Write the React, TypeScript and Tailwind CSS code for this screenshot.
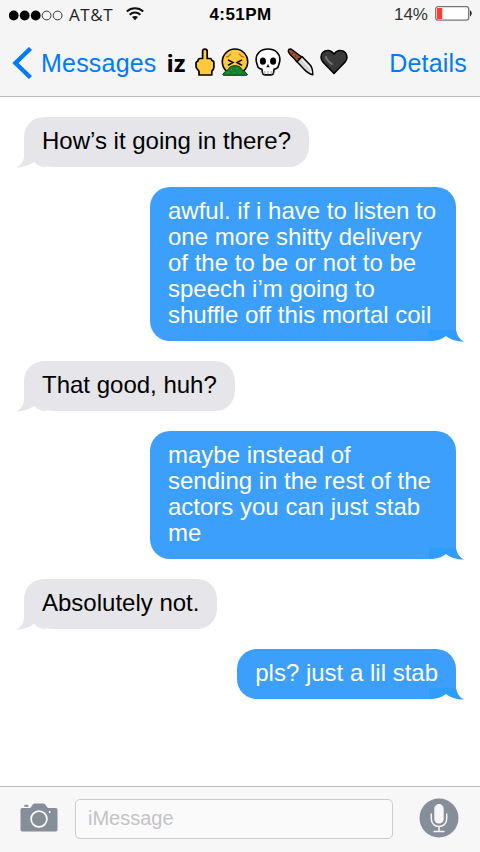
import React from 'react';

interface Message {
  id: number;
  text: string;
  sent: boolean;
}

const messages: Message[] = [
  { id: 1, text: 'How’s it going in there?', sent: false },
  {
    id: 2,
    text: 'awful. if i have to listen to one more shitty delivery of the to be or not to be speech i’m going to shuffle off this mortal coil',
    sent: true
  },
  { id: 3, text: 'That good, huh?', sent: false },
  { id: 4, text: 'maybe instead of sending in the rest of the actors you can just stab me', sent: true },
  { id: 5, text: 'Absolutely not.', sent: false },
  { id: 6, text: 'pls? just a lil stab', sent: true }
];

const SignalDots: React.FC = () => (
  <svg className="w-[54px] h-[11px]" viewBox="0 0 54 11">
    {[5, 16, 27].map((cx) => (
      <circle key={cx} cx={cx - 0.3} cy="5.5" r="4.9" fill="#000" />
    ))}
    {[38, 49].map((cx) => (
      <circle key={cx} cx={cx - 0.4} cy="5.5" r="4.4" fill="none" stroke="#222" strokeWidth="0.9" />
    ))}
  </svg>
);

const WifiIcon: React.FC = () => (
  <svg className="w-[18px] h-[14px]" viewBox="0 0 18 14" fill="none" stroke="#111" strokeWidth="2">
    <path d="M0.8 4.5C5.5 0.2 12.5 0.2 17.2 4.5" />
    <path d="M3.6 7.7C6.8 4.9 11.2 4.9 14.4 7.7" />
    <path d="M6 10.1C7.7 8.5 10.3 8.5 12 10.1L9 13.2Z" fill="#111" stroke="none" />
  </svg>
);

const BatteryIcon: React.FC = () => (
  <svg className="w-[37px] h-[15px]" viewBox="0 0 37 15">
    <rect x="0.7" y="0.7" width="33" height="13.4" rx="2.3" fill="#fff" stroke="#777" strokeWidth="1.3" />
    <rect x="2" y="2" width="5.2" height="11" fill="#ff3b30" />
    <path d="M35 4.3C37.2 5.3 37.2 9.4 35 10.4Z" fill="#222" />
  </svg>
);

const MiddleFinger: React.FC = () => (
  <svg className="w-5 h-7" viewBox="0 0 20 28">
    <path
      d="M7.6 10.5V3.3C7.6 0.3 12.2 0.3 12.2 3.3V10.5H15.4Q16.5 10.6 16.7 12.2L18.4 13.2Q19 13.7 18.9 15V19.5Q18.8 21.2 16.8 23.2V27H4V23.2L1.8 20.5Q1 19.5 1 18V14.8Q1.1 13.6 2.8 13.1L3.6 11.2Q4 10.5 5 10.5Z"
      fill="#ffc83d"
      stroke="#000"
      strokeWidth="1.7"
      strokeLinejoin="round"
    />
  </svg>
);

const VomitFace: React.FC = () => (
  <svg className="w-7 h-7" viewBox="0 0 28 28">
    <circle cx="14" cy="13.7" r="12.7" fill="#ffc83d" stroke="#000" strokeWidth="1.6" />
    <path d="M5 9.2Q8.3 8.4 9.9 5.8M23 9.2Q19.7 8.4 18.1 5.8" fill="none" stroke="#bd7c12" strokeWidth="1.3" />
    <path d="M7 11.8L12 14.5L7 17.4M21 11.8L16 14.5L21 17.4" fill="none" stroke="#000" strokeWidth="1.5" />
    <path
      d="M7.4 21.5C8 18.7 11 17.7 14 17.7S20 18.7 20.6 21.5C22.4 22.6 24.5 23.5 26.3 26.4Q26.6 27.2 25.3 27.3H2.8Q1.4 27.2 2 26.1C3.7 23.5 5.3 22.5 7.4 21.5Z"
      fill="#16802b"
      stroke="#063d12"
      strokeWidth="1"
    />
    <path d="M9 22l2-1M15 20l2 1M6 25l2-1M12 25l2-1M18 24l2 1" stroke="#27a340" strokeWidth="1" />
  </svg>
);

const Skull: React.FC = () => (
  <svg className="w-[26px] h-7" viewBox="0 0 26 28">
    <path
      d="M13 1C5.8 1 1.1 5.5 1.1 11.5C1.1 14 2 15.8 2.4 17.3C2.8 19.8 4 20.6 6.9 21.2L7.5 25Q7.8 26.9 9.7 26.9H16.3Q18.2 26.9 18.5 25L19.1 21.2C22 20.6 23.2 19.8 23.6 17.3C24 15.8 24.9 14 24.9 11.5C24.9 5.5 20.2 1 13 1Z"
      fill="#fff"
      stroke="#000"
      strokeWidth="1.6"
    />
    <ellipse cx="7.9" cy="13.2" rx="3" ry="3.6" />
    <ellipse cx="18.1" cy="13.2" rx="3" ry="3.6" />
    <path d="M13 16L14.7 19.3H11.3Z" />
    <path d="M9.8 23V26.5M13 23V26.5M16.2 23V26.5" stroke="#999" strokeWidth="1" />
  </svg>
);

const Knife: React.FC = () => (
  <svg className="w-[27px] h-7" viewBox="0 0 27 28">
    <path
      d="M9.8 13.6L15 8.6L23.4 17.3C25.2 19.6 25.7 23 25.8 26.8C21.5 25.8 18.8 23.3 16.6 20.8Z"
      fill="#d4d4d4"
      stroke="#000"
      strokeWidth="1.5"
      strokeLinejoin="round"
    />
    <path d="M14.5 11L22 19C23.4 20.6 24.2 22.6 24.5 25" stroke="#f4f4f4" strokeWidth="1.2" fill="none" />
    <path
      d="M1.2 2.8Q1.7 0.6 4.4 1.2L14.5 8.9L10 13.8C8.2 12.6 7.9 10.9 6 9.4C4 7.6 1.5 5.8 1.2 2.8Z"
      fill="#a0522d"
      stroke="#000"
      strokeWidth="1.4"
      strokeLinejoin="round"
    />
    <path d="M5 5.2h.9M8.2 8h.9M10.7 10.5h.9" stroke="#2b1308" strokeWidth="1" />
  </svg>
);

const BlackHeart: React.FC = () => (
  <svg className="w-7 h-7" viewBox="0 0 28 28">
    <path
      d="M14 25.4L3.1 14.2C0.5 11.3 0.3 7 2.8 4.5C5.9 1.3 11.3 1.8 14 6.2C16.7 1.8 22.1 1.3 25.2 4.5C27.7 7 27.5 11.3 24.9 14.2Z"
      fill="#393939"
      stroke="#000"
      strokeWidth="1.6"
      strokeLinejoin="round"
    />
    <path d="M6 9Q6.8 12.8 11.8 16" fill="none" stroke="#777" strokeWidth="2" strokeLinecap="round" />
  </svg>
);

const CameraIcon: React.FC = () => (
  <svg className="-mt-[2px] w-[38px] h-[29px]" viewBox="0 0 38 29">
    <path
      d="M2.2 5H10.3L12.8 1.5Q13.5 0.5 15 0.5H23Q24.5 0.5 25.2 1.5L27.8 5H35.8Q37.5 5 37.5 6.8V26.6Q37.5 28.5 35.8 28.5H2.2Q0.5 28.5 0.5 26.6V6.8Q0.5 5 2.2 5Z"
      fill="#858e99"
    />
    <path d="M4.2 3.7V3Q4.2 1.8 5.4 1.8H7.2Q8.5 1.8 8.5 3V3.7Z" fill="#858e99" />
    <circle cx="19" cy="16" r="7.9" fill="none" stroke="#fff" strokeWidth="1.7" />
    <circle cx="29.7" cy="9" r="1" fill="#fff" />
  </svg>
);

const MicIcon: React.FC = () => (
  <svg className="w-10 h-10" viewBox="0 0 40 40">
    <circle cx="20" cy="20" r="19.5" fill="#858e99" />
    <rect x="15.3" y="6" width="9.4" height="19.6" rx="4.7" fill="#f7f7f7" />
    <path d="M12.3 15.5V21C12.3 31 27.7 31 27.7 21V15.5" fill="none" stroke="#f7f7f7" strokeWidth="1.5" />
    <path d="M20 28V33M14.5 33.4H25.5" stroke="#f7f7f7" strokeWidth="1.5" />
  </svg>
);

const Bubble: React.FC<{ message: Message }> = ({ message }) => {
  if (message.sent) {
    return (
      <div className="relative self-end max-w-[306px] px-[18px] pt-[11px] pb-[13px] rounded-[20px] rounded-br-[28px] bg-[#3b9ffb] text-white">
        <svg className="absolute -right-2 -bottom-px w-[35px] h-[30px]" viewBox="0 0 35 30">
          <path d="M0 0H27V18.5H0Z" fill="#3b9ffb" />
          <path d="M0 18H27C28 23 30 27 35 29.6C28 29.3 22 28 17 24C13 27 8 29 0 29Z" fill="#2e9dff" />
        </svg>
        <span className="relative">{message.text}</span>
      </div>
    );
  }
  return (
    <div className="relative self-start max-w-[306px] px-[18px] pt-[11px] pb-[13px] rounded-[20px] rounded-bl-[28px] bg-[#e5e5ea] text-black">
      <svg className="absolute -left-2 -bottom-px w-[30px] h-[30px]" viewBox="0 0 30 30">
        <path d="M8 0V17C8 22 6 27 0 29.8C7 29.5 13 27.5 18 24C21 27 25 29 30 29V0Z" fill="#e5e5ea" />
      </svg>
      <span className="relative">{message.text}</span>
    </div>
  );
};

const App: React.FC = () => {
  return (
    <div className="flex flex-col w-[480px] h-[852px] overflow-hidden bg-white font-['Liberation_Sans',sans-serif]">
      <header className="h-[97px] shrink-0 bg-[#f5f5f5] border-b border-[#bdbdbd]">
        {/* Status bar */}
        <div className="grid grid-cols-3 items-center h-[30px] pl-[9px] pr-2">
          <div className="flex items-center">
            <SignalDots />
            <span className="ml-[6px] w-[45px] text-[17px] leading-[30px] tracking-[0.6px] text-[#222] font-['Open_Sans',sans-serif]">AT&amp;T</span>
            <span className="ml-3 -mt-[3px]">
              <WifiIcon />
            </span>
          </div>
          <span className="text-center text-[17px] leading-[30px] tracking-[0.4px] font-bold text-black">4:51PM</span>
          <div className="flex items-center justify-end gap-[7px]">
            <span className="text-[17px] leading-[30px] text-[#333]">14%</span>
            <span className="-mt-[3px]">
              <BatteryIcon />
            </span>
          </div>
        </div>

        {/* Conversation title */}
        <div className="flex items-center h-[66px] pl-3 pr-[13px]">
          <svg className="w-5 h-8 shrink-0" viewBox="0 0 20 32">
            <path d="M18.5 1.5L3.5 16L18.5 30.5" fill="none" stroke="#007aff" strokeWidth="4.4" />
          </svg>
          <span className="ml-[9px] pt-0.5 text-[25px] tracking-[0.2px] text-[#007aff]">Messages</span>
          <div className="ml-[10px] flex items-center">
            <span className="w-7 text-[24px] font-bold text-black font-['Open_Sans',sans-serif]">iz</span>
            <div className="flex items-center gap-[6px] pb-0.5">
              <MiddleFinger />
              <VomitFace />
              <Skull />
              <Knife />
              <BlackHeart />
            </div>
          </div>
          <span className="ml-auto pt-0.5 text-[25px] tracking-[0.2px] text-[#007aff]">Details</span>
        </div>
      </header>

      <main className="flex-1 flex flex-col gap-5 px-6 pt-5 text-[24px] leading-[26px]">
        {messages.map((message) => (
          <Bubble key={message.id} message={message} />
        ))}
      </main>

      <footer className="flex items-center h-[66px] shrink-0 pl-5 pr-[21px] pb-0.5 bg-[#f7f7f7] border-t border-[#b5bbc1]">
        <CameraIcon />
        <input
          type="text"
          placeholder="iMessage"
          className="ml-[17px] w-[318px] h-10 px-3 rounded-[5px] border border-[#cbcbcd] bg-[#fafafa] text-[20px] placeholder:text-[#c3c3c8] outline-none"
        />
        <span className="ml-auto -mt-px">
          <MicIcon />
        </span>
      </footer>
    </div>
  );
};

export default App;
